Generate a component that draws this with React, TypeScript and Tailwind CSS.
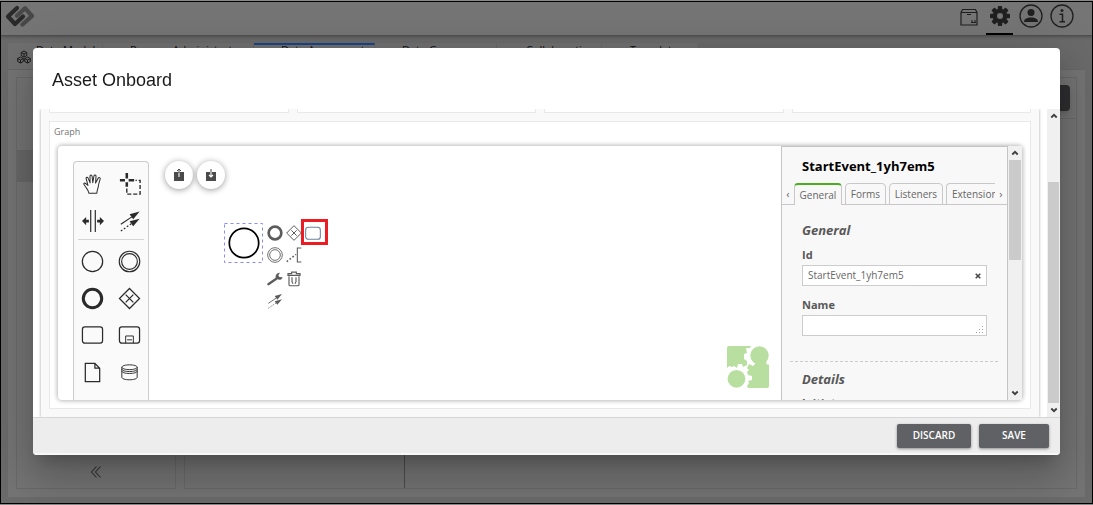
import type { ReactNode } from "react";

type IconProps = { className?: string; children: ReactNode; box?: string };

function Icon({ className = "size-6", children, box = "0 0 24 24" }: IconProps) {
  return (
    <svg viewBox={box} className={className} fill="none" stroke="currentColor" strokeWidth={1.3} aria-hidden="true">
      {children}
    </svg>
  );
}

const connectShapes = (
  <>
    <path d="M2 15.5 14 7.5" />
    <path d="M22.5 1.500 11.5 4.5l4 5.500z" fill="currentColor" stroke="none" />
    <path d="M2 23 14 14.5" strokeDasharray="2 2" />
    <path d="M22.5 9.500 11.5 12.200l4 5.500z" fill="currentColor" stroke="none" />
  </>
);

const tools: { label: string; shape: ReactNode }[] = [
  {
    label: "Activate the hand tool",
    shape: (
      <path
        strokeWidth={1.1}
        strokeLinejoin="round"
        d="M7.500 22C7 18.500 5 17 3.500 14.500 2.700 13 1.500 12.300 2 11.500c.8-1 2.200-.2 3.200 1l1.300 1L4.500 6c-.3-1.600 1.600-2 2.200-.4l2.100 5.200L8.700 3.500c0-1.700 2.100-1.700 2.300 0l.8 7 1.200-7.200c.4-1.600 2.400-1.200 2.300.3l-.5 7.400 2.800-5.300c.8-1.500 2.700-.6 2.200.9-1 3-1.800 5.500-2.100 8.500-.4 2.500-1.400 3.500-1.500 6.900z"
      />
    ),
  },
  {
    label: "Activate the lasso tool",
    shape: (
      <>
        <path d="M8.500 0v6M8.500 10v5M1 8h5.500M10.500 8h6" strokeWidth={2.800} />
        <path d="M8.500 17v6h14.500V8h-5" strokeWidth={1.500} strokeDasharray="4.500 2" />
      </>
    ),
  },
  {
    label: "Activate the create/remove space tool",
    shape: (
      <>
        <path d="M9.500 0v24M14.500 0v24" />
        <path d="M0 12 4.500 7.500v3h3v3h-3v3zM24 12l-4.500-4.500v3h-3v3h3v3z" fill="currentColor" stroke="none" />
      </>
    ),
  },
  { label: "Activate the global connect tool", shape: connectShapes },
];

const shapes: { label: string; shape: ReactNode }[] = [
  { label: "Create StartEvent", shape: <circle cx="12" cy="12" r="10.600" /> },
  {
    label: "Create Intermediate Event",
    shape: (
      <>
        <circle cx="12" cy="12" r="10.700" strokeWidth={1.2} />
        <circle cx="12" cy="12" r="8.200" strokeWidth={1.2} />
      </>
    ),
  },
  { label: "Create EndEvent", shape: <circle cx="12" cy="12" r="9.600" strokeWidth={3.2} /> },
  {
    label: "Create Gateway",
    shape: <path d="M12 1.500 22.500 12 12 22.500 1.500 12zM8 8l8 8M16 8l-8 8" />,
  },
  { label: "Create Task", shape: <rect x="1.500" y="3" width="21" height="17" rx="2.500" /> },
  {
    label: "Create expanded SubProcess",
    shape: (
      <>
        <rect x="1.500" y="3" width="21" height="17" rx="2.500" />
        <path d="M8 20v-7.500h8V20M9.500 16.500h5" strokeWidth={1} />
      </>
    ),
  },
  {
    label: "Create DataObjectReference",
    shape: <path d="M4.500 2.500h10L19.500 7.500V21.500h-15zM14.500 2.500v5h5" />,
  },
  {
    label: "Create DataStoreReference",
    shape: (
      <path
        strokeWidth={1}
        d="M4 6.500c0-1.400 3.600-2.500 8-2.500s8 1.100 8 2.500S16.400 9 12 9 4 7.900 4 6.500zV17c0 1.500 3.600 2.600 8 2.600s8-1.100 8-2.600V6.500M4 8.500C4 10 7.600 11 12 11s8-1 8-2.500M4 10.500c0 1.500 3.600 2.500 8 2.500s8-1 8-2.500"
      />
    ),
  },
];

const pad: { label: string; place: string; shape: ReactNode }[] = [
  { label: "Append EndEvent", place: "left-[208px] top-[78px]", shape: <circle cx="12" cy="12" r="9.500" strokeWidth={4} /> },
  { label: "Append Gateway", place: "left-[227px] top-[78px]", shape: <path d="M12 1 23 12 12 23 1 12zM8 8l8 8M16 8l-8 8" strokeWidth={1.500} /> },
  { label: "Append Task", place: "left-[246px] top-[78px]", shape: <rect x="1" y="3.500" width="22" height="18" rx="4" stroke="#70809a" strokeWidth={1.600} /> },
  {
    label: "Append Intermediate Event",
    place: "left-[208px] top-[100px]",
    shape: (
      <>
        <circle cx="12" cy="12" r="11" />
        <circle cx="12" cy="12" r="8" />
      </>
    ),
  },
  {
    label: "Append TextAnnotation",
    place: "left-[227px] top-[100px]",
    shape: (
      <>
        <path d="M23 1.500h-6v21h6" strokeWidth={1.600} />
        <path d="M1 22 15 11" strokeWidth={2.400} strokeDasharray="2.500 3" />
      </>
    ),
  },
  {
    label: "Change type",
    place: "left-[208px] top-[124px]",
    shape: (
      <path
        fill="currentColor"
        stroke="none"
        d="M1 18.500 13 10C12.300 6 14.500 2.500 19.500 2.500L17 6.200l1.500 2.800 5 .2c-1 3.500-4.500 4.800-7.500 3.300L3 21.500c-2 1-3.500-1.500-2-3z"
      />
    ),
  },
  {
    label: "Remove",
    place: "left-[227px] top-[124px]",
    shape: (
      <>
        <path d="M3 6.500V4h5.500V1.800h7V4H21v2.500z" strokeWidth={1.800} />
        <path d="M4.500 8v12.500c0 1 .6 1.700 1.700 1.700h11.600c1.100 0 1.700-.7 1.700-1.700V8M9 9.500v6.500l1.500 3M15 9.500v6.500l-1.500 3" strokeWidth={1.700} />
      </>
    ),
  },
  { label: "Connect using Sequence Flow", place: "left-[208px] top-[146px]", shape: connectShapes },
];

const pageTabs = [
  { name: "Data Models", size: "w-[95px] pl-7", active: false },
  { name: "Process Administrator", size: "w-[151px] pl-[27px]", active: false },
  { name: "Data Agreement", size: "w-[121px] pl-[27px]", active: true },
  { name: "Data Governance", size: "w-[122px] pl-[27px]", active: false },
  { name: "Collaborations", size: "w-[105px] pl-[29px]", active: false },
  { name: "Templates", size: "w-[97px] pl-[28px]", active: false },
];

function PageHeader() {
  return (
    <header className="flex h-[34px] shrink-0 items-center justify-between border-b border-[#4f4f4f] bg-[#757575] pl-1 shadow-[0_1px_3px_rgba(0,0,0,0.25)]">
      <a href="#home" aria-label="Home" className="mb-1.5">
        <svg viewBox="0 0 30 22" className="h-[22px] w-[30px]" fill="none" strokeWidth={4.200} strokeLinecap="round" strokeLinejoin="round">
          <path d="M12 3 3 11.500 10 19 18 11.500" stroke="#2a2a2a" />
          <path d="M17.500 19.500 27 11 20 3.200 12 10.700" stroke="#484848" />
        </svg>
      </a>
      <nav className="flex h-full items-center gap-1 pr-[17px] text-[#202020]">
        <button aria-label="Packages" className="flex h-full w-[27px] items-center justify-center pb-[3px]">
          <Icon className="size-[18px]" box="0 0 18 18">
            <path d="M1 4.500 2.500 1.500h13L17 4.500V17H1zM1 4.500h16M7 6.500h4" strokeWidth={1.200} />
            <path d="M11 14.500h5M12 12v2M15 12v2" strokeWidth={1} />
          </Icon>
        </button>
        <button aria-label="Settings" className="flex h-full w-[27px] items-center justify-center border-b-2 border-black pb-[3px]">
          <svg viewBox="0 0 20 20" className="size-5" aria-hidden="true">
            <g fill="currentColor">
              <rect x="7.800" y="0" width="4.400" height="20" rx="1" />
              <rect x="7.800" y="0" width="4.400" height="20" rx="1" transform="rotate(45 10 10)" />
              <rect x="7.800" y="0" width="4.400" height="20" rx="1" transform="rotate(90 10 10)" />
              <rect x="7.800" y="0" width="4.400" height="20" rx="1" transform="rotate(135 10 10)" />
              <circle cx="10" cy="10" r="7.300" />
            </g>
            <circle cx="10" cy="10" r="3" fill="#757575" />
          </svg>
        </button>
        <button aria-label="Account" className="flex h-full w-[27px] items-center justify-center pb-1.5">
          <Icon>
            <circle cx="12" cy="12" r="11" />
            <circle cx="12" cy="8.500" r="3.500" fill="currentColor" stroke="none" />
            <path d="M5 18c0-3 2.500-4.500 7-4.500s7 1.500 7 4.500z" fill="currentColor" stroke="none" />
          </Icon>
        </button>
        <button aria-label="Information" className="flex h-full w-[27px] items-center justify-center pb-1.5">
          <Icon>
            <circle cx="12" cy="12" r="11" />
            <circle cx="12" cy="6.500" r="1.500" fill="currentColor" stroke="none" />
            <path d="M9.500 10.200h3V17M9.500 17.700h5.500" strokeWidth={1.500} />
          </Icon>
        </button>
      </nav>
    </header>
  );
}

function PageBody() {
  return (
    <main className="flex min-h-0 flex-1 flex-col px-[7px] pb-[6px] pt-[7px]">
      <nav className="flex h-[26px] shrink-0 text-[11px] leading-[10px] text-[#101010]">
        {pageTabs.map((tab) => (
          <a
            key={tab.name}
            href="#tab"
            className={`whitespace-nowrap border-r border-r-[#666666] bg-[#707070] ${tab.size} ${
              tab.active ? "border-t-2 border-t-[#1b438c]" : "border-t-2 border-t-[#707070]"
            }`}
          >
            {tab.name}
          </a>
        ))}
      </nav>
      <svg viewBox="0 0 14 14" className="absolute left-4 top-12 size-[14px]" fill="none" stroke="#1c1c1c" strokeWidth={1} aria-hidden="true">
        <path d="M7 1l2.800 1.500v3L7 7 4.200 5.500v-3zM3.500 7l2.800 1.500v3l-2.800 1.500-2.800-1.500v-3zM10.500 7l2.800 1.500v3l-2.800 1.500-2.800-1.500v-3zM4.200 2.500 7 4l2.800-1.500M7 4v3M.7 8.500l2.800 1.500 2.800-1.500M3.500 10v3M7.700 8.500l2.800 1.500 2.800-1.500M10.500 10v3" />
      </svg>
      <div className="flex min-h-0 flex-1 gap-2 border-t border-[#666666] bg-[#747474] px-2 pb-2 pt-[7px]">
        <aside className="flex w-40 flex-col justify-between border border-[#696969]">
          <div className="mt-[72px] h-8 bg-[#686868]" />
          <button aria-label="Collapse sidebar" className="flex h-[33px] items-center justify-center text-[#333333]">
            <Icon className="size-3" box="0 0 12 12">
              <path d="M6.500 .500 1.500 6l5 5.500M10.500 .500 5.500 6l5 5.500" strokeWidth={1.100} />
            </Icon>
          </button>
        </aside>
        <section className="flex min-w-0 flex-1 flex-col border border-[#696969]">
          <div className="flex h-[41px] items-center justify-end border-b border-[#696969] px-1.5">
            <button aria-label="Add asset" className="h-[26px] w-20 rounded-sm bg-[#2e2e30] shadow-md" />
          </div>
          <div className="w-[220px] flex-1 border-r border-[#4c4c4c]" />
        </section>
      </div>
    </main>
  );
}

function ScrollRail({ thumb, width }: { thumb: string; width: string }) {
  return (
    <div className={`flex shrink-0 flex-col items-center bg-[#f0f0f0] text-[#404040] ${width}`}>
      <Icon className="h-[14px] w-2 shrink-0" box="0 0 8 14">
        <path d="M1.300 8.500 4 5.800l2.700 2.700" strokeWidth={1.900} />
      </Icon>
      <div className="flex min-h-0 w-full flex-1 flex-col px-px">
        <div className={`bg-[#cbcbcb] ${thumb}`} />
      </div>
      <Icon className="h-[14px] w-2 shrink-0" box="0 0 8 14">
        <path d="M1.300 5.500 4 8.200l2.700-2.700" strokeWidth={1.900} />
      </Icon>
    </div>
  );
}

function Palette() {
  return (
    <div className="mt-[15px] w-[76px] shrink-0 rounded-t-sm border border-b-0 border-[#cccccc] bg-[#fafafa] pt-[3px] text-[#2b2b2b]">
      <div className="grid grid-cols-2">
        {tools.map((t) => (
          <button key={t.label} title={t.label} aria-label={t.label} className="flex h-[37px] items-center justify-center">
            <Icon className="size-[22px]">{t.shape}</Icon>
          </button>
        ))}
      </div>
      <hr className="mx-1 border-[#d4d4d4]" />
      <div className="mt-[3px] grid grid-cols-2">
        {shapes.map((t) => (
          <button key={t.label} title={t.label} aria-label={t.label} className="flex h-[37px] items-center justify-center">
            <Icon className="size-[23px]">{t.shape}</Icon>
          </button>
        ))}
      </div>
    </div>
  );
}

function Canvas() {
  return (
    <div className="relative flex min-w-0 flex-1 overflow-hidden pl-[15px]">
      <Palette />
      <div className="ml-4 mt-[15px] flex gap-1 text-[#4a4a4a]">
        <button aria-label="Upload diagram" className="flex size-7 items-center justify-center rounded-full bg-white shadow-[0_1px_6px_rgba(0,0,0,0.4)]">
          <Icon className="size-[14px]" box="0 0 14 14">
            <path d="M2 4h10v9H2z" fill="currentColor" stroke="none" />
            <path d="M7 9V4.500" stroke="#ffffff" strokeWidth={1.100} />
            <path d="M7 4.500V1M5 3l2-2 2 2" strokeWidth={1} />
          </Icon>
        </button>
        <button aria-label="Download diagram" className="flex size-7 items-center justify-center rounded-full bg-white shadow-[0_1px_6px_rgba(0,0,0,0.4)]">
          <Icon className="size-[14px]" box="0 0 14 14">
            <path d="M2 4h10v9H2z" fill="currentColor" stroke="none" />
            <path d="M7 4v5M5 7l2 2 2-2" stroke="#ffffff" strokeWidth={1.100} />
            <path d="M7 1v3" strokeWidth={1} />
          </Icon>
        </button>
      </div>
      <svg viewBox="0 0 40 40" className="absolute left-[166px] top-[77px] size-10" fill="none" aria-label="Start event" role="img">
        <rect x="0.500" y="0.500" width="38" height="39" stroke="#8888ff" strokeDasharray="3 3" />
        <circle cx="20" cy="20" r="14.700" stroke="#000000" strokeWidth={1.700} />
      </svg>
      {pad.map((p) => (
        <button key={p.label} title={p.label} aria-label={p.label} className={`absolute flex size-[18px] items-center justify-center text-[#5c5c5c] ${p.place}`}>
          <Icon className="size-4">{p.shape}</Icon>
        </button>
      ))}
      <div className="pointer-events-none absolute left-[243px] top-[73px] h-[26px] w-[27px] border-3 border-[#ed1c24]" />
      <svg viewBox="0 0 42 42" className="absolute bottom-3 right-3 size-[42px]" role="img" aria-label="Modeler logo">
        <path fill="#b9dfa0" d="M2 0h22l-1 2h-4l1 5-3 1v5l3 2 0 4-4 2-1-3h-4l-1 4-3-2-2 1-3-1-2 2V2a2 2 0 0 1 2-2z" />
        <circle cx="32.500" cy="9.500" r="9.200" fill="#b9dfa0" />
        <circle cx="9.500" cy="32.800" r="8.900" fill="#b9dfa0" />
        <path fill="#b9dfa0" d="M42 18v22a2 2 0 0 1-2 2H21l-1-2 2-3-1-2 4-1v-4l-4-1-1-3 2-2-2-2 2-4 4 2 3-3-1-3 2-1 2 4h4l1-4 3 1-1 3 2 2z" />
      </svg>
    </div>
  );
}

const propertyTabs = [
  { name: "General", active: true, size: "w-[48px]" },
  { name: "Forms", active: false, size: "w-[41px]" },
  { name: "Listeners", active: false, size: "w-[54px]" },
];

function PropertiesPanel() {
  return (
    <aside className="flex w-[241px] shrink-0">
      <div className="flex min-w-0 flex-1 flex-col overflow-hidden border-x border-t border-[#c4c4c4] bg-[#f8f8f8] font-['Open_Sans','Noto_Sans',sans-serif] text-[11px] text-[#666666]">
        <h2 className="mt-[9px] pl-5 text-[13px] font-bold leading-5 text-black">StartEvent_1yh7em5</h2>
        <div role="tablist" className="mt-[7px] flex h-[22px] shrink-0 items-end border-b border-[#c8c8c8]">
          <button aria-label="Previous tab" className="w-[12px] leading-5">‹</button>
          <div className="-mb-px flex min-w-0 flex-1 gap-[3px] overflow-hidden">
            {propertyTabs.map((tab) => (
              <button
                key={tab.name}
                role="tab"
                aria-selected={tab.active}
                className={`h-[22px] shrink-0 whitespace-nowrap rounded-t-sm border border-[#c8c8c8] bg-[#f8f8f8] text-[10px] ${tab.size} ${
                  tab.active ? "border-b-0 border-t-2 border-t-[#4cae1e]" : ""
                }`}
              >
                {tab.name}
              </button>
            ))}
            <button role="tab" aria-selected={false} className="h-[22px] shrink-0 whitespace-nowrap rounded-tl-sm border border-r-0 border-[#c8c8c8] pl-[5px] text-[10px]">
              Extension
            </button>
          </div>
          <button aria-label="Next tab" className="w-3 leading-5">›</button>
        </div>
        <section className="pl-5 pr-5 pt-[15px]">
          <h3 className="text-[13px] font-bold italic leading-5 text-[#585858]">General</h3>
          <label htmlFor="event-id" className="mt-[7px] block font-bold leading-4 text-[#585858]">Id</label>
          <div className="mt-0.5 flex h-[21px] items-center border border-[#cccccc] bg-white">
            <input id="event-id" defaultValue="StartEvent_1yh7em5" className="min-w-0 flex-1 bg-transparent pl-[5px] text-[10px] outline-none" />
            <button aria-label="Clear id" className="w-[17px] text-[#444444]">
              <Icon className="mx-auto size-[6px]" box="0 0 6 6">
                <path d="M.7.700l4.600 4.600M5.300.700.7 5.300" strokeWidth={1.500} />
              </Icon>
            </button>
          </div>
          <label htmlFor="event-name" className="mt-[11px] block font-bold leading-4 text-[#585858]">Name</label>
          <div className="mt-0.5 flex h-[21px] items-end border border-[#cccccc] bg-white">
            <textarea id="event-name" rows={1} className="h-full min-w-0 flex-1 resize-none bg-transparent outline-none" />
            <svg viewBox="0 0 8 8" className="mb-px mr-0.5 size-2" fill="#a0a0a0" aria-hidden="true">
              <path d="M6 0h1v1H6zM3 3h1v1H3zM6 3h1v1H6zM0 6h1v1H0zM3 6h1v1H3zM6 6h1v1H6z" />
            </svg>
          </div>
        </section>
        <hr className="ml-2 mr-[9px] mt-[25px] border-dashed border-[#cccccc]" />
        <section className="pl-5 pt-[7px]">
          <h3 className="text-[13px] font-bold italic leading-5 text-[#585858]">Details</h3>
          <p className="mt-1.5 font-bold leading-4 text-[#585858]">Initiator</p>
        </section>
      </div>
      <ScrollRail width="w-[14px]" thumb="h-[100px] shrink-0" />
    </aside>
  );
}

function AssetDialog() {
  return (
    <div role="dialog" aria-modal="true" aria-labelledby="dialog-title" className="flex min-h-0 w-full flex-1 flex-col overflow-hidden rounded-sm bg-white">
      <h1 id="dialog-title" className="shrink-0 px-[19px] pb-[16px] pt-[19px] font-['Liberation_Sans',Arial,sans-serif] text-[18px] leading-[26px] text-[#1a1a1a]">
        Asset Onboard
      </h1>
      <div className="flex min-h-0 flex-1 justify-between">
        <div className="mx-2 flex min-w-0 flex-1 flex-col bg-[#f9f9f9] px-2 pb-2 shadow-[0_0_3px_rgba(0,0,0,0.35)] [clip-path:inset(0_-4px)]">
          <div className="grid h-1 shrink-0 grid-cols-4 gap-2">
            <div className="border border-t-0 border-[#e9e9e9] bg-white" />
            <div className="border border-t-0 border-[#e9e9e9] bg-white" />
            <div className="border border-t-0 border-[#e9e9e9] bg-white" />
            <div className="border border-t-0 border-[#e9e9e9] bg-white" />
          </div>
          <section className="mt-2 flex min-h-0 flex-1 flex-col border border-[#e9e9e9] bg-white pb-2 pl-2 pr-2">
            <h2 className="-ml-1 pb-2 pt-[3px] text-[9px] leading-[13px] text-[#757575]">Graph</h2>
            <div className="flex min-h-0 flex-1 rounded-sm bg-white shadow-[0_0_4px_1px_rgba(0,0,0,0.28)]">
              <Canvas />
              <PropertiesPanel />
            </div>
          </section>
        </div>
        <ScrollRail width="w-[13px]" thumb="mt-[59px] flex-1" />
      </div>
      <footer className="flex h-[38px] shrink-0 items-center justify-end gap-2 border-b-2 border-t border-b-[#f8f8f8] border-t-[#d6d6d6] bg-[#ededed] pr-[11px] text-[10px] font-semibold text-white">
        <button className="h-6 w-[74px] rounded-xs bg-[#606165] shadow-[0_1px_3px_rgba(0,0,0,0.4)]">DISCARD</button>
        <button className="h-6 w-[70px] rounded-xs bg-[#606165] shadow-[0_1px_3px_rgba(0,0,0,0.4)]">SAVE</button>
      </footer>
    </div>
  );
}

export default function App() {
  return (
    <div className="flex h-screen flex-col bg-[#8a8a8a] py-px font-['Open_Sans','Noto_Sans',sans-serif]">
      <div className="relative flex min-h-0 flex-1 flex-col overflow-hidden border border-black bg-[#6a6a6a]">
        <PageHeader />
        <PageBody />
      </div>
      <div className="fixed inset-0 flex px-[33px] pb-[50px] pt-12">
        <div className="flex min-w-0 flex-1 rounded-sm shadow-[0_11px_15px_-7px_rgba(0,0,0,0.2),0_24px_38px_3px_rgba(0,0,0,0.14),0_9px_46px_8px_rgba(0,0,0,0.12)]">
          <AssetDialog />
        </div>
      </div>
    </div>
  );
}
